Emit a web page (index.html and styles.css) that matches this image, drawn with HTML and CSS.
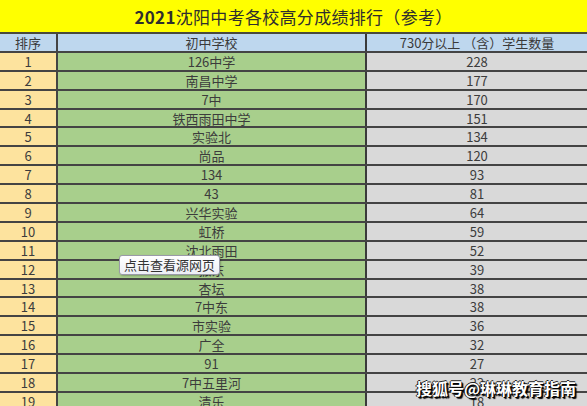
FILE: index.html
```html
<!DOCTYPE html>
<html lang="zh-CN">
<head>
    <meta charset="UTF-8">
    <title>2021沈阳中考各校高分成绩排行</title>
    <link rel="stylesheet" href="styles.css">
</head>
<body>

<div class="sheet">
    <div class="title"><b>2021</b>沈阳中考各校高分成绩排行（参考）</div>
    <div class="row head">
        <div class="c rank">排序</div>
        <div class="c school">初中学校</div>
        <div class="c count">730分以上 （含）学生数量</div>
    </div>
    <div id="rows"></div>

    <div class="tip">点击查看源网页</div>
    <div class="mark">搜狐号@琳琳教育指南</div>
</div>

<script>
    // rank, school, students with 730+
    var data = [
        [1, "126中学", 228],
        [2, "南昌中学", 177],
        [3, "7中", 170],
        [4, "铁西雨田中学", 151],
        [5, "实验北", 134],
        [6, "尚品", 120],
        [7, "134", 93],
        [8, "43", 81],
        [9, "兴华实验", 64],
        [10, "虹桥", 59],
        [11, "沈北雨田", 52],
        [12, "振东", 39],
        [13, "杏坛", 38],
        [14, "7中东", 38],
        [15, "市实验", 36],
        [16, "广全", 32],
        [17, "91", 27],
        [18, "7中五里河", 22],
        [19, "清乐", 18]
    ];

    var html = "";
    data.forEach(function (d) {
        html += '<div class="row">' +
            '<div class="c rank">' + d[0] + '</div>' +
            '<div class="c school">' + d[1] + '</div>' +
            '<div class="c count">' + d[2] + '</div>' +
            '</div>';
    });
    document.getElementById("rows").innerHTML = html;
</script>

</body>
</html>
```

FILE: styles.css
```css
body {
    margin: 0;
    font-family: "Noto Sans CJK SC", "Noto Sans", sans-serif;
    background-color: #fff;
    overflow: hidden;
}

.sheet {
    position: relative;
    width: 587px;
    height: 406px;
    overflow: hidden;
}

.title {
    height: 32px;
    line-height: 34px;
    background-color: #ffff00;
    border-bottom: 2px solid #4a4a3a;
    text-align: center;
    font-size: 17px;
    color: #2e2e2e;
    letter-spacing: 0.3px;
}

.title b {
    font-weight: bold;
}

.row {
    display: grid;
    grid-template-columns: 58px 309px 1fr;
    height: 18.9px;
    box-sizing: border-box;
    border-bottom: 2px solid #444;
}

.c {
    text-align: center;
    font-size: 13px;
    line-height: 17px;
    color: #3c3c3c;
    white-space: nowrap;
    overflow: hidden;
}

.rank {
    background-color: #fde39e;
    border-right: 2px solid #444;
}

.school {
    background-color: #a8cf8c;
    border-right: 2px solid #3a3a3a;
}

.count {
    background-color: #d9d9d9;
}

.head .c {
    background-color: #bed7ee;
    color: #3a3a3a;
}

.tip {
    position: absolute;
    left: 119px;
    top: 255px;
    height: 18px;
    padding: 0 4px;
    font-size: 13px;
    line-height: 18px;
    color: #333;
    background: linear-gradient(#ffffff, #eceef5);
    border: 1px solid #9a9aa8;
    border-radius: 3px;
    box-shadow: 1px 1px 2px rgba(0, 0, 0, 0.25);
}

.mark {
    position: absolute;
    left: 416px;
    top: 376px;
    font-size: 16px;
    font-weight: bold;
    color: #fff;
    white-space: nowrap;
    text-shadow: 1px 1px 0 #000, -1px 0 0 #222, 0 -1px 0 #222, 2px 2px 1px #000;
}
```
